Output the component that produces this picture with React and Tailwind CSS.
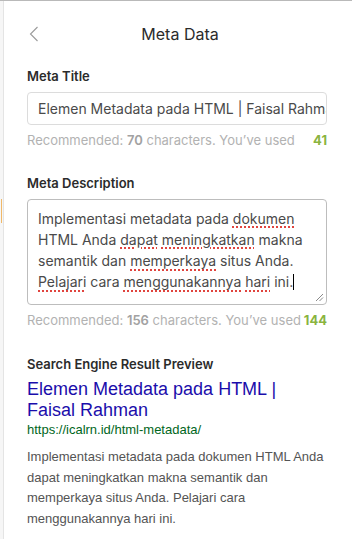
import React from "react";

const ui = { fontFamily: 'Inter, "Noto Sans", sans-serif' };
const arial = { fontFamily: '"Liberation Sans", Arial, sans-serif' };

function Sp({ children }) {
  return (
    <span className="underline decoration-dotted decoration-[#e0443e] decoration-[1.5px] underline-offset-[3px]">
      {children}
    </span>
  );
}

export default function App() {
  return (
    <div className="w-[352px] h-[539px] bg-white overflow-hidden border-t border-[#b9b9b9] flex" style={ui}>
      <div className="w-[3px] bg-[#f6f6f6] relative shrink-0">
        <div className="absolute left-[1px] top-[198px] w-[1px] h-[24px] bg-[#f0b868]" />
      </div>
      <div className="flex-1 min-w-0 border-l border-[#e4e4e4] flex flex-col pl-[23px] pr-[25px]">
        <div className="h-[66px] flex items-center relative">
          <svg className="absolute left-[2px] top-[25px]" width="10" height="16" viewBox="0 0 10 16" fill="none">
            <path d="M8.5 1 L1.5 8 L8.5 15" stroke="#9a9a9a" strokeWidth="1.1" />
          </svg>
          <div className="w-full text-center text-[16px] text-[#2b2b2b] pl-[6px]">Meta Data</div>
        </div>

        <div className="text-[13px] leading-[18px] font-semibold text-[#2b2b2b]">Meta Title</div>
        <div className="mt-[7px] h-[33px] border border-[#dcdcdc] rounded-[4px] flex items-center pl-[10px] overflow-hidden whitespace-nowrap text-[14px] text-[#4a4a4a]">
          Elemen Metadata pada HTML | Faisal Rahman
        </div>
        <div className="mt-[6px] flex justify-between text-[13px] leading-[18px] text-[#b2b2b2]">
          <span>
            Recommended: <b className="text-[#a2a2a2] font-semibold">70</b> characters. You’ve used
          </span>
          <b className="text-[#8ab43f] font-bold">41</b>
        </div>

        <div className="mt-[25px] text-[13px] leading-[18px] font-semibold text-[#2b2b2b]">Meta Description</div>
        <div className="mt-[7px] h-[106px] border border-[#bdbdbd] rounded-[4px] relative pl-[10px] pr-[8px] pt-[7.5px] text-[14px] leading-[21.3px] text-[#4a4a4a]">
          <div>
            Implementasi metadata pada <Sp>dokumen</Sp> HTML Anda <Sp>dapat</Sp> <Sp>meningkatkan</Sp> makna
            semantik dan <Sp>memperkaya</Sp> situs Anda. <Sp>Pelajari</Sp> cara <Sp>menggunakannya</Sp>{" "}
            <Sp>hari</Sp> ini.
            <span className="inline-block w-[1px] h-[16px] bg-black align-[-3px]" />
          </div>
          <svg className="absolute right-[2px] bottom-[2px]" width="9" height="9" viewBox="0 0 9 9">
            <path d="M1 8 L8 1 M4.5 8 L8 4.5" stroke="#8a8a8a" strokeWidth="1" />
          </svg>
        </div>
        <div className="mt-[6px] flex justify-between text-[13px] leading-[18px] text-[#b2b2b2]">
          <span>
            Recommended: <b className="text-[#a2a2a2] font-semibold">156</b> characters. You’ve used
          </span>
          <b className="text-[#8ab43f] font-bold">144</b>
        </div>

        <div className="mt-[26px] text-[13px] leading-[18px] font-semibold text-[#2b2b2b]">
          Search Engine Result Preview
        </div>
        <div style={arial}>
          <div className="mt-[5.5px] text-[18px] leading-[21px] text-[#1a0dab] pr-[40px]">
            Elemen Metadata pada HTML | Faisal Rahman
          </div>
          <div className="text-[13px] leading-[18px] text-[#006621]">https://icalrn.id/html-metadata/</div>
          <div className="mt-[8.5px] text-[13px] leading-[20.7px] text-[#545454]">
            Implementasi metadata pada dokumen HTML Anda dapat meningkatkan makna semantik dan memperkaya situs
            Anda. Pelajari cara menggunakannya hari ini.
          </div>
        </div>
      </div>
    </div>
  );
}
